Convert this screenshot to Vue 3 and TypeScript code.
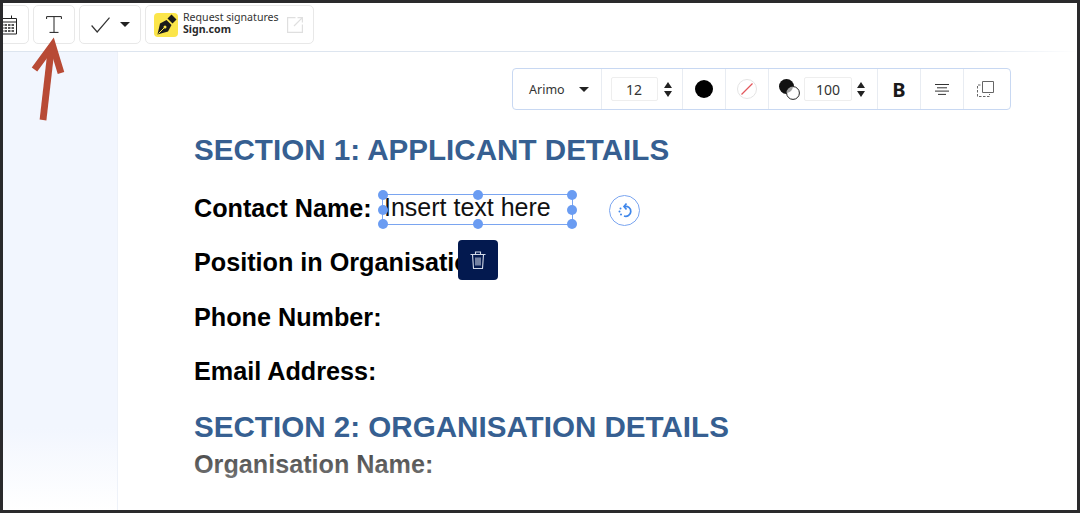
<script setup lang="ts">
const handles: Array<[number, number]> = [
  [0, 0], [50, 0], [100, 0],
  [0, 50], [100, 50],
  [0, 100], [50, 100], [100, 100],
]
function handleStyle(h: [number, number]) {
  return { left: h[0] + '%', top: h[1] + '%' }
}
const fields = ['Position in Organisation:', 'Phone Number:', 'Email Address:']
</script>

<template>
  <div class="frame">
    <header class="toolbar">
      <button class="tool tool-cal">
        <svg width="20" height="24" viewBox="0 0 20 24" fill="none" stroke="#222" stroke-width="1">
          <path d="M1 5.500h16.500v15.500H1z" />
          <path d="M1 9h16.500M12.500 2.500v3" />
          <path d="M2 12h14M2 15h14M2 18h14" stroke-dasharray="2.500 1" stroke-width="1.500" />
        </svg>
      </button>
      <button class="tool tool-t">
        <svg width="16" height="17" viewBox="0 0 16 17" fill="none" stroke="#222" stroke-width="1">
          <path d="M.6 3V.6h14.800V3M8 .6v15.800M3.500 16.400h9" />
        </svg>
      </button>
      <button class="tool tool-check">
        <svg width="19" height="16" viewBox="0 0 19 16" fill="none" stroke="#333" stroke-width="1.200">
          <path d="M.6 8.500l5.600 6.500L18.500 .6" />
        </svg>
        <span class="caret"></span>
      </button>
      <button class="tool tool-sign">
        <span class="logo">
          <svg width="24" height="24" viewBox="0 0 24 24">
            <rect width="24" height="24" rx="4" fill="#fbe54a" />
            <path d="M3.500 21.500L6 10.500l6.500-3.500 5 5-3.500 6.500z" fill="#1a1a1a" />
            <path d="M13.500 5.500L17.500 1.500l5 5-4 4z" fill="#1a1a1a" />
            <path d="M4.500 20.500l5.500-5.500" stroke="#fbe54a" stroke-width="1" />
            <circle cx="11" cy="14" r="1.500" fill="#fbe54a" />
          </svg>
        </span>
        <span class="sign-text">
          <span class="sign-top">Request signatures</span>
          <strong class="sign-name">Sign.com</strong>
        </span>
        <svg class="ext" width="16" height="16" viewBox="0 0 16 16" fill="none" stroke="#dfdfdf" stroke-width="1.200">
          <path d="M8.500 .6H.6v14.800h14.800V7.500M7 9l8.400-8.400M10.500 .6h4.900v4.900" />
        </svg>
      </button>
    </header>

    <div class="workspace">
      <aside class="sidebar"></aside>
      <main class="doc">
        <h2 class="section first">SECTION 1: APPLICANT DETAILS</h2>
        <p class="label contact">Contact Name:</p>
        <p v-for="f in fields" :key="f" class="label">{{ f }}</p>
        <h2 class="section second">SECTION 2: ORGANISATION DETAILS</h2>
        <p class="label org">Organisation Name:</p>
        <div class="fade"></div>
      </main>
    </div>

    <div class="format-bar">
      <div class="cell cell-font">
        <span class="font-name">Arimo</span>
        <span class="caret"></span>
      </div>
      <div class="cell cell-num cell-size">
        <span class="num num-size">12</span>
        <span class="spin"><i class="up"></i><i class="down"></i></span>
      </div>
      <div class="cell cell-color"><span class="dot"></span></div>
      <div class="cell cell-none">
        <svg width="20" height="20" viewBox="0 0 20 20" fill="none">
          <circle cx="10" cy="10" r="9.500" stroke="#e4e4e4" />
          <path d="M4.500 15.500L15.500 4.500" stroke="#e2575c" stroke-width="1.200" />
        </svg>
      </div>
      <div class="cell cell-num cell-op">
        <svg class="op-icon" width="21" height="21" viewBox="0 0 21 21" fill="none">
          <circle cx="7.500" cy="7.500" r="7.500" fill="#111" />
          <circle cx="14" cy="14" r="6.400" fill="#fff" stroke="#222" />
          <path d="M7.700 14A6.300 6.300 0 0 1 14 7.700 7.500 7.500 0 0 1 7.700 14z" fill="#a0a0a0" />
        </svg>
        <span class="num num-op">100</span>
        <span class="spin"><i class="up"></i><i class="down"></i></span>
      </div>
      <div class="cell cell-bold"><b>B</b></div>
      <div class="cell cell-align">
        <svg width="14" height="11" viewBox="0 0 14 11" stroke="#333" stroke-width="1">
          <path d="M0 .5h14M2 3.800h10M0 7.100h14M3 10.400h8" />
        </svg>
      </div>
      <div class="cell cell-copy">
        <svg width="17" height="16" viewBox="0 0 17 16" fill="none" stroke="#666" stroke-width="1">
          <path d="M5.500 .5h11v11h-11z" />
          <path d="M3.500 4H.5v11.500h12V13" stroke-dasharray="2.500 1.500" />
        </svg>
      </div>
    </div>

    <div class="selection">
      <span class="insert">Insert text here</span>
      <i v-for="(h, i) in handles" :key="i" class="handle" :style="handleStyle(h)"></i>
    </div>

    <button class="rotate">
      <svg width="18" height="18" viewBox="0 0 18 18" fill="none" stroke="#3f86ea" stroke-width="1.700">
        <path d="M8.500 4.500a5 5 0 1 1-.5 9.500" />
        <path d="M10.500 1.500L8 4.500l2.500 3" />
        <path d="M3.500 9.500v.01M4.500 6.500v.01M5 12.500v.01" stroke-linecap="round" stroke-width="2" />
      </svg>
    </button>

    <button class="trash">
      <svg width="16" height="18" viewBox="0 0 16 18" fill="none" stroke="#d2d9e8" stroke-width="1.100">
        <path d="M.5 3.500h15M5.500 3.500V1h5v2.500" />
        <path d="M2.500 3.500l1 14h9l1-14" />
        <path d="M6 6.500v8M8 6.500v8M10 6.500v8" />
      </svg>
    </button>

    <svg class="arrow" width="36" height="86" viewBox="0 0 36 86" fill="none" stroke="#b84a35" stroke-width="6.800">
      <path d="M12 84L20.500 10" />
      <path d="M3.500 33.500L21.500 9 30 37" stroke-linejoin="miter" />
    </svg>
  </div>
</template>

<style>
html, body { margin: 0; padding: 0; background: #fff; }
</style>

<style scoped>
.frame {
  position: relative;
  width: 1080px;
  height: 513px;
  box-sizing: border-box;
  border: 3px solid #2a2a2c;
  overflow: hidden;
  background: #fff;
  font-family: "Liberation Sans", Arial, sans-serif;
  display: flex;
  flex-direction: column;
}
.toolbar {
  flex: 0 0 49px;
  box-sizing: border-box;
  display: flex;
  align-items: flex-start;
  gap: 4px;
  padding-top: 2px;
  border-bottom: 1px solid;
  border-image: linear-gradient(90deg, #dde5ef 0%, #dde5ef 90%, #ffffff 100%) 1;
  overflow: hidden;
}
.tool {
  height: 39px;
  box-sizing: border-box;
  padding: 0;
  border: 1px solid #e8e8e8;
  border-radius: 5px;
  background: #fff;
  display: flex;
  align-items: center;
  justify-content: center;
  flex: none;
}
.tool-cal { width: 42px; margin-left: -16px; justify-content: flex-end; padding-right: 9px; }
.tool-t { width: 42px; }
.tool-check { width: 62px; gap: 10px; justify-content: flex-start; padding-left: 11px; }
.tool-sign {
  width: 169px;
  justify-content: flex-start;
  padding-left: 8px;
  gap: 5px;
}
.caret {
  width: 0;
  height: 0;
  border-left: 5px solid transparent;
  border-right: 5px solid transparent;
  border-top: 5px solid #222;
}
.logo { display: flex; width: 24px; height: 24px; }
.sign-text {
  display: flex;
  flex-direction: column;
  align-items: flex-start;
  font-family: "Noto Sans", sans-serif;
  font-size: 10.600px;
  line-height: 12px;
  color: #333;
  white-space: nowrap;
  padding-bottom: 3px;
}
.sign-name { color: #2b2b2b; }
.ext { margin-left: 3px; }

.workspace { flex: 1; display: flex; min-height: 0; }
.sidebar {
  flex: 0 0 114px;
  border-right: 1px solid #eef2f9;
  background: linear-gradient(180deg, #f2f6fe 0%, #f2f6fe 82%, #ffffff 100%);
}
.doc {
  flex: 1;
  position: relative;
  padding-left: 76px;
  padding-top: 80px;
  overflow: hidden;
}
.section {
  margin: 0;
  font-size: 29.600px;
  line-height: 36px;
  font-weight: 700;
  color: #365f91;
  white-space: nowrap;
}
.label {
  margin: 0;
  font-size: 25.200px;
  line-height: 32px;
  height: 54.400px;
  font-weight: 700;
  color: #000;
  white-space: nowrap;
}
.contact { margin-top: 24px; }
.second { margin-top: -1px; }
.org { margin-top: 3px; }
.fade {
  position: absolute;
  left: 0;
  right: 0;
  bottom: 0;
  height: 75px;
  background: linear-gradient(180deg, rgba(255,255,255,0) 0%, rgba(255,255,255,0.3) 25%, rgba(255,255,255,0.44) 55%, #fff 100%);
}

.format-bar {
  position: absolute;
  left: 509px;
  top: 65px;
  width: 499px;
  height: 42px;
  box-sizing: border-box;
  display: flex;
  background: #fff;
  border: 1px solid #c8d8f2;
  border-radius: 4px;
}
.cell {
  display: flex;
  align-items: center;
  justify-content: center;
  border-right: 1px solid #e8ecf2;
  box-sizing: border-box;
  flex: none;
}
.cell:last-child { border-right: 0; }
.cell-font {
  width: 89px;
  gap: 14px;
  justify-content: flex-start;
  padding-left: 16px;
  font-family: "Noto Sans", sans-serif;
  font-size: 12.500px;
  color: #333;
}
.cell-num { gap: 5px; }
.cell-size { width: 81px; gap: 6px; padding-right: 2px; }
.cell-color { width: 43px; }
.cell-none { width: 43px; }
.cell-op { width: 109px; padding-right: 2px; }
.op-icon { margin-right: -1px; }
.cell-bold { width: 43px; }
.cell-bold b { font-family: "Noto Sans", sans-serif; font-size: 20px; color: #1a1a1a; }
.cell-align { width: 43px; }
.cell-copy { flex: 1; padding-right: 4px; }
.dot { width: 18px; height: 18px; border-radius: 50%; background: #000; }
.num {
  height: 24px;
  box-sizing: border-box;
  border: 1px solid #eeeeee;
  border-radius: 2px;
  display: flex;
  align-items: center;
  justify-content: center;
  font-family: "Noto Sans", sans-serif;
  font-size: 14px;
  color: #333;
}
.num-size { width: 47px; }
.num-op { width: 48px; }
.spin { display: flex; flex-direction: column; gap: 3px; }
.up, .down { display: block; width: 0; height: 0; border-left: 4.500px solid transparent; border-right: 4.500px solid transparent; }
.up { border-bottom: 6px solid #222; }
.down { border-top: 6px solid #222; }

.selection {
  position: absolute;
  left: 379px;
  top: 191px;
  width: 189px;
  height: 29px;
  border: 1px solid #7aa5f0;
}
.insert {
  position: absolute;
  left: 1px;
  top: -2px;
  font-size: 25px;
  line-height: 28px;
  color: #111;
  white-space: nowrap;
}
.handle {
  position: absolute;
  width: 10px;
  height: 10px;
  margin: -5px 0 0 -5px;
  border-radius: 50%;
  background: #6a9cf2;
}
.rotate {
  position: absolute;
  left: 606px;
  top: 192px;
  width: 31px;
  height: 31px;
  padding: 0;
  border: 1px solid #7aa5f0;
  border-radius: 50%;
  background: #fff;
  display: flex;
  align-items: center;
  justify-content: center;
}
.trash {
  position: absolute;
  left: 455px;
  top: 237px;
  width: 40px;
  height: 40px;
  padding: 0;
  border: 0;
  border-radius: 4px;
  background: #03194f;
  display: flex;
  align-items: center;
  justify-content: center;
}
.arrow { position: absolute; left: 28px; top: 33px; overflow: visible; }
</style>
